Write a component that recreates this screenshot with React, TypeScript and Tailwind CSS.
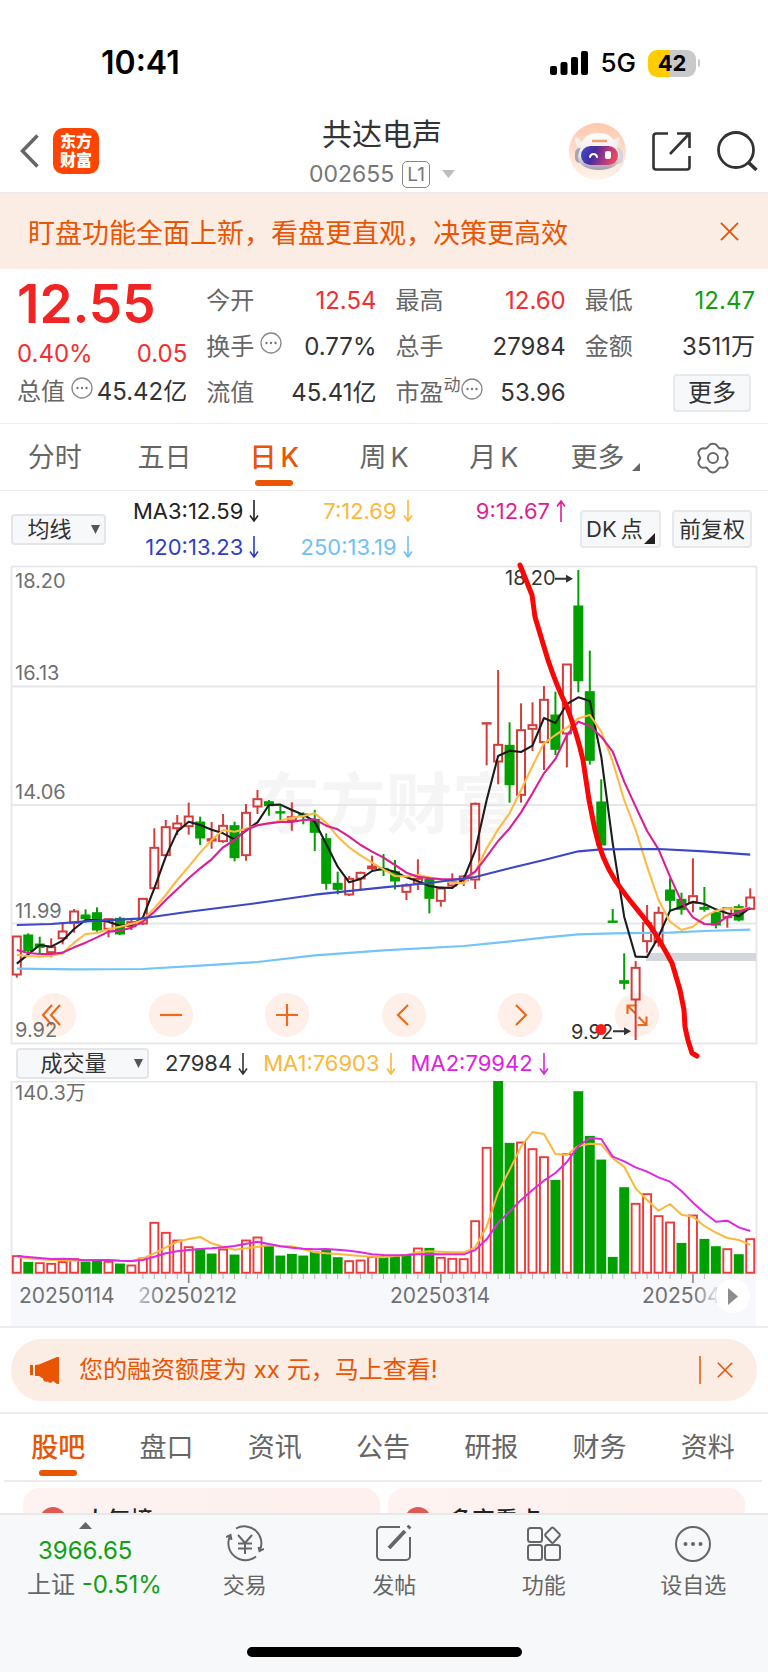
import React, { useState } from "react";
import clsx from "clsx";

type Bar = [up: 0 | 1, high: number, top: number, bottom: number, low: number];

const STEP = 11.46;
const barX = (i: number) => 16.8 + STEP * i;
const barY = (v: number) => v / 3;

// prettier-ignore
const candles: Bar[] = [
  [1, 1128, 1128, 1245, 1253], [0, 1120, 1125, 1172, 1185], [0, 1130, 1152, 1162, 1182],
  [1, 1135, 1160, 1178, 1192], [1, 1092, 1113, 1136, 1153], [1, 1047, 1053, 1090, 1118],
  [0, 1048, 1065, 1076, 1088], [0, 1042, 1058, 1110, 1115], [1, 1076, 1076, 1108, 1132],
  [0, 1070, 1075, 1122, 1125], [1, 1078, 1085, 1100, 1110], [1, 1015, 1015, 1092, 1095],
  [1, 805, 862, 986, 986], [1, 780, 800, 887, 887], [1, 765, 789, 806, 825],
  [1, 728, 768, 800, 824], [0, 770, 786, 834, 855], [1, 786, 836, 843, 866],
  [1, 762, 796, 845, 848], [0, 785, 797, 893, 904], [1, 732, 757, 887, 902],
  [1, 690, 716, 741, 762], [0, 720, 725, 737, 767], [0, 738, 755, 758, 785],
  [1, 727, 770, 783, 812], [0, 757, 762, 770, 793], [0, 750, 778, 817, 873],
  [0, 820, 836, 970, 989], [0, 935, 970, 988, 1003], [1, 948, 955, 1005, 1008],
  [1, 935, 937, 957, 993], [1, 887, 918, 926, 930], [0, 882, 925, 930, 948],
  [0, 900, 935, 963, 988], [1, 970, 975, 997, 1020], [1, 898, 955, 972, 990],
  [0, 955, 958, 1015, 1060], [1, 980, 984, 1024, 1040], [1, 940, 965, 978, 985],
  [1, 945, 948, 962, 978], [1, 728, 730, 960, 987], [1, 488, 488, 491, 616],
  [1, 330, 553, 606, 673], [0, 487, 556, 674, 728], [1, 430, 509, 706, 728],
  [1, 427, 494, 508, 573], [1, 378, 418, 548, 630], [0, 395, 465, 568, 585],
  [1, 312, 312, 522, 622], [0, 30, 138, 362, 397], [0, 272, 395, 601, 614],
  [0, 658, 726, 855, 855], [0, 1047, 1083, 1086, 1086], [0, 1180, 1262, 1270, 1288],
  [1, 1203, 1222, 1320, 1440], [1, 1035, 1088, 1145, 1178], [1, 1040, 1057, 1148, 1160],
  [0, 955, 990, 1021, 1050], [0, 998, 1018, 1048, 1064], [1, 895, 1007, 1030, 1057],
  [0, 981, 1042, 1048, 1055], [0, 1055, 1058, 1095, 1105], [1, 1043, 1043, 1073, 1103],
  [0, 1033, 1040, 1080, 1084], [1, 985, 1011, 1048, 1050],
];

// prettier-ignore
const ma3 = [
  1211, 1183, 1155, 1160, 1142, 1107, 1080, 1080, 1085, 1097, 1095, 1073, 985, 890, 815, 785, 795, 809, 820, 838,
  812, 787, 735, 734, 750, 764, 785, 852, 920, 967, 957, 933, 926, 935, 952, 964, 978, 983, 984, 957, 872, 720,
  588, 572, 576, 557, 474, 489, 432, 412, 423, 590, 850, 1070, 1190, 1191, 1130, 1052, 1040, 1025, 1032, 1048,
  1060, 1069, 1043,
];
// prettier-ignore
const ma7 = [
  1185, 1188, 1190, 1187, 1180, 1148, 1122, 1119, 1108, 1100, 1092, 1080, 1045, 1005, 960, 920, 878, 840, 810, 815,
  806, 796, 790, 782, 773, 768, 760, 788, 830, 862, 886, 908, 928, 948, 949, 945, 952, 959, 968, 970, 935, 865,
  808, 760, 690, 618, 550, 525, 503, 475, 465, 515, 605, 720, 810, 920, 1020, 1085, 1110, 1100, 1070, 1052, 1045,
  1047, 1044,
];
// prettier-ignore
const ma9 = [
  1170, 1179, 1182, 1182, 1178, 1162, 1148, 1132, 1115, 1112, 1103, 1085, 1055, 1020, 988, 955, 925, 898, 862, 840,
  810, 796, 790, 786, 786, 780, 778, 797, 808, 830, 855, 875, 893, 915, 938, 950, 955, 957, 958, 957, 935, 890,
  843, 805, 757, 700, 640, 597, 525, 485, 498, 530, 575, 665, 740, 813, 868, 950, 1025, 1072, 1092, 1093, 1070,
  1055, 1044,
];
// prettier-ignore
const ma120: [number, number][] = [
  [0, 1095], [3, 1092], [6, 1084], [11, 1075], [15, 1055], [21, 1029], [26, 1004], [32, 982], [36, 969], [40, 951],
  [43, 925], [46, 900], [49, 874], [51, 868], [56, 867], [60, 874], [64, 884],
];
// prettier-ignore
const ma250: [number, number][] = [
  [0, 1226], [5, 1228], [11, 1227], [16, 1217], [21, 1206], [26, 1186], [32, 1171], [39, 1158], [42, 1148],
  [46, 1133], [49, 1123], [52, 1120], [57, 1118], [60, 1113], [64, 1109],
];

// prettier-ignore
const volumes: [0 | 1, number][] = [
  [1, 647], [0, 667], [1, 668], [1, 670], [1, 665], [1, 656], [0, 666], [0, 660], [1, 664], [0, 672], [1, 675],
  [1, 654], [1, 547], [1, 577], [1, 600], [1, 620], [0, 627], [0, 642], [1, 627], [0, 645], [1, 600], [1, 591],
  [0, 620], [0, 648], [0, 643], [0, 648], [0, 636], [0, 630], [0, 653], [1, 662], [1, 660], [1, 650], [0, 650],
  [0, 650], [0, 645], [1, 624], [0, 625], [1, 652], [1, 655], [1, 656], [1, 542], [1, 322], [0, 124], [0, 310],
  [1, 306], [1, 326], [1, 350], [0, 421], [1, 341], [0, 155], [0, 289], [0, 360], [0, 652], [0, 443], [1, 490],
  [1, 461], [1, 527], [1, 546], [0, 610], [1, 525], [0, 598], [0, 620], [1, 626], [0, 644], [1, 596],
];
// prettier-ignore
const volMa1 = [
  650, 655, 658, 660, 660, 662, 660, 660, 660, 662, 664, 655, 640, 622, 605, 597, 591, 610, 620, 629, 625, 620,
  615, 618, 619, 628, 637, 640, 642, 645, 648, 650, 652, 648, 645, 637, 634, 635, 637, 637, 622, 560, 457, 390,
  320, 276, 282, 342, 345, 318, 311, 313, 355, 380, 445, 480, 512, 492, 524, 530, 558, 578, 594, 600, 614,
];
// prettier-ignore
const volMa2 = [
  648, 651, 654, 657, 656, 658, 661, 660, 660, 662, 663, 660, 650, 640, 634, 630, 627, 625, 622, 618, 611, 605,
  612, 619, 623, 626, 628, 627, 629, 632, 637, 643, 645, 646, 645, 643, 642, 643, 643, 643, 630, 598, 548, 515,
  480, 450, 422, 399, 366, 318, 294, 297, 350, 364, 382, 395, 412, 425, 453, 488, 518, 545, 542, 562, 573,
];

const toLine = (values: number[]) =>
  values.map((v, i) => `${barX(i)},${barY(v)}`).join(" ");

const toSparseLine = (points: [number, number][]) =>
  points.map(([i, v]) => `${barX(i)},${barY(v)}`).join(" ");

const periods = ["分时", "五日", "日K", "周K", "月K"];
const infoTabs = ["股吧", "盘口", "资讯", "公告", "研报", "财务", "资料"];

function Trend({ up = false }: { up?: boolean }) {
  return (
    <svg width="10" height="22" viewBox="0 0 10 22" fill="none" stroke="currentColor" strokeWidth="1.6">
      {up ? <path d="M5 22V1M1 6.5 5 1l4 5.5" /> : <path d="M5 0v21M1 15.5 5 21l4-5.5" />}
    </svg>
  );
}

function Close({ size }: { size: number }) {
  return (
    <svg width={size} height={size} viewBox="0 0 20 20" fill="none" stroke="currentColor" strokeWidth="2">
      <path d="m1 1 18 18M19 1 1 19" />
    </svg>
  );
}

function InfoDots() {
  return (
    <svg width="22" height="22" viewBox="0 0 22 22" className="mb-2 shrink-0">
      <circle cx="11" cy="11" r="10" fill="none" stroke="#888" strokeWidth="1.3" />
      <circle cx="6.5" cy="11" r="1.2" fill="#777" />
      <circle cx="11" cy="11" r="1.2" fill="#777" />
      <circle cx="15.5" cy="11" r="1.2" fill="#777" />
    </svg>
  );
}

function StatusBar() {
  return (
    <div className="flex items-center justify-between pt-11 pr-[68px] pl-[101px] leading-[38px] text-black">
      <span className="text-[32px] font-semibold">10:41</span>
      <div className="flex items-center gap-3">
        <svg width="38" height="24" viewBox="0 0 38 24">
          <rect x="0" y="15" width="7" height="9" rx="2" />
          <rect x="10.500" y="11" width="7" height="13" rx="2" />
          <rect x="21" y="6" width="7" height="18" rx="2" />
          <rect x="31" y="0" width="7" height="24" rx="2" />
        </svg>
        <span className="text-[26px] leading-[38px] font-medium">5G</span>
        <div className="flex items-center gap-0.5">
          <span className="flex h-[27px] w-12 items-center justify-center rounded-[9px] bg-linear-to-r from-[#fc0] from-45% to-[#c9c9cb] to-45% text-[22px] font-bold">
            42
          </span>
          <span className="h-2 w-0.5 rounded-r bg-[#c9c9cb]" />
        </div>
      </div>
    </div>
  );
}

function Robot() {
  return (
    <svg width="57" height="57" viewBox="0 0 57 57">
      <defs>
        <linearGradient id="halo" x1="0" y1="0" x2="0" y2="1">
          <stop offset="0" stopColor="#fdc9ac" />
          <stop offset="1" stopColor="#fff3ec" />
        </linearGradient>
        <linearGradient id="shell" x1="0" y1="0" x2="0" y2="1">
          <stop offset="0" stopColor="#fff" />
          <stop offset="0.6" stopColor="#ebe7ea" />
          <stop offset="1" stopColor="#9f9bab" />
        </linearGradient>
        <linearGradient id="visor" x1="0" y1="0" x2="1" y2="0.2">
          <stop offset="0" stopColor="#3b4fd0" />
          <stop offset="0.4" stopColor="#4a2a9d" />
          <stop offset="0.75" stopColor="#b03a80" />
          <stop offset="1" stopColor="#e8485e" />
        </linearGradient>
      </defs>
      <circle cx="28.500" cy="28.500" r="28.500" fill="url(#halo)" />
      <path d="M6 14c3 1 6 3 8 6l-4 5c-3-3-5-7-4-11ZM50 14c-3 1-6 3-8 6l5 5c3-3 4-7 3-11Z" fill="#f3efee" />
      <rect x="6" y="25" width="10" height="15" rx="5" fill="#aaa5b2" />
      <rect x="43" y="25" width="11" height="16" rx="5" fill="#d8d3da" />
      <path d="M29 10c10 0 16 4 18 13l4 10c0 9-9 14-21 14S9 42 9 33l3-10c2-9 7-13 17-13Z" fill="url(#shell)" />
      <rect x="12" y="23" width="37" height="19" rx="9.500" fill="url(#visor)" />
      <path d="M21 34c1-4 6-4 7 0" fill="none" stroke="#fff" strokeWidth="2" strokeLinecap="round" />
      <rect x="36" y="28" width="6" height="8" rx="2" fill="#fff" />
      <path d="M23 18h15" stroke="#eda06c" strokeWidth="2.500" />
    </svg>
  );
}

function Header() {
  return (
    <header className="flex items-center border-b-2 border-[#ececef] pt-8 pr-[10px] pb-1 pl-5">
      <div className="flex flex-1 items-center gap-[14px]">
        <button aria-label="返回">
          <svg width="19" height="34" viewBox="0 0 19 34" fill="none" stroke="#666" strokeWidth="3.500">
            <path d="M17.500 1.500 2.500 17l15 15.500" />
          </svg>
        </button>
        <a
          href="#home"
          className="flex h-[46px] w-[46px] flex-col justify-center rounded-[10px] bg-[#fe4400] text-center text-[16px] leading-[19px] font-black text-white"
        >
          <span>东方</span>
          <span>财富</span>
        </a>
      </div>
      <div className="pr-[14px] text-center">
        <h1 className="text-[30px] leading-10 text-[#333]">共达电声</h1>
        <div className="mt-1.5 flex items-center justify-center gap-2 text-[#777]">
          <span className="text-[23px] leading-7">002655</span>
          <span className="rounded-[5px] border-[1.5px] border-[#888] px-1 text-[19px] leading-[25px]">L1</span>
          <svg width="13" height="8" viewBox="0 0 13 8" className="ml-1" fill="#bdbdbd">
            <path d="M0 0h13L6.500 8Z" />
          </svg>
        </div>
      </div>
      <div className="flex flex-1 items-center justify-end gap-[26px]">
        <button aria-label="智能助手">
          <Robot />
        </button>
        <button aria-label="分享">
          <svg width="39" height="39" viewBox="0 0 39 39" fill="none" stroke="#333" strokeWidth="2.600">
            <path d="M16 1.500H4a2.500 2.500 0 0 0-2.500 2.500v31A2.500 2.500 0 0 0 4 37.500h31a2.500 2.500 0 0 0 2.500-2.500V24M25 1.500h12.500V16M37 2 18 22" />
          </svg>
        </button>
        <button aria-label="搜索">
          <svg width="41" height="40" viewBox="0 0 41 40" fill="none" stroke="#333" strokeWidth="2.800">
            <circle cx="19" cy="19" r="17.500" />
            <path d="m31 31 8.500 8" strokeWidth="3.500" />
          </svg>
        </button>
      </div>
    </header>
  );
}

function Quote({ label, value, color = "text-[#333]", mark, dots }: {
  label: string;
  value: string;
  color?: string;
  mark?: string;
  dots?: boolean;
}) {
  return (
    <div className="flex h-7 items-center justify-between leading-7 whitespace-nowrap">
      <div className="flex items-center text-[#666]">
        {label}
        {mark && <span className="mb-4 text-[17px] leading-5">{mark}</span>}
        {dots && <span className={clsx(!mark && "ml-1.5")}><InfoDots /></span>}
      </div>
      <span className={color}>{value}</span>
    </div>
  );
}

function QuotePanel() {
  return (
    <section className="grid grid-cols-4 gap-x-[19px] border-b border-[#ececef] pt-[9px] pr-[13px] pb-[7px] pl-[17px] text-[24px]">
      <div>
        <div className="text-[53px] leading-[52px] font-semibold text-[#f22323]">12.55</div>
        <div className="flex justify-between leading-[48px] text-[#f03030]">
          <span>0.40%</span>
          <span>0.05</span>
        </div>
        <Quote label="总值" value="45.42亿" dots />
      </div>
      <div className="grid auto-rows-[46px] items-center">
        <Quote label="今开" value="12.54" color="text-[#f03030]" />
        <Quote label="换手" value="0.77%" dots />
        <Quote label="流值" value="45.41亿" />
      </div>
      <div className="grid auto-rows-[46px] items-center">
        <Quote label="最高" value="12.60" color="text-[#f03030]" />
        <Quote label="总手" value="27984" />
        <Quote label="市盈" value="53.96" mark="动" dots />
      </div>
      <div className="grid auto-rows-[46px] items-center">
        <Quote label="最低" value="12.47" color="text-[#12a012]" />
        <Quote label="金额" value="3511万" />
        <div className="flex items-center justify-end pr-1">
          <button className="rounded border-2 border-[#e6e8ec] bg-[#f7f8fa] px-[13px] leading-[34px] text-[#333]">
            更多
          </button>
        </div>
      </div>
    </section>
  );
}

function TabButton({ active, onClick, children }: {
  active: boolean;
  onClick: () => void;
  children: React.ReactNode;
}) {
  return (
    <button onClick={onClick} className="flex flex-col items-center text-[27px] leading-10">
      <span className={clsx("flex gap-1", active ? "font-medium text-[#ea5504]" : "text-[#666]")}>{children}</span>
      <span className={clsx("mt-0.5 h-1.5 w-[38px] rounded-full", active && "bg-[#ea5504]")} />
    </button>
  );
}

function PeriodTabs() {
  const [period, setPeriod] = useState("日K");

  return (
    <nav className="grid grid-cols-7 border-b border-[#ececef] pt-[14px] pb-1">
      {periods.map((name) => (
        <TabButton key={name} active={period === name} onClick={() => setPeriod(name)}>
          {name.endsWith("K") ? (
            <>
              <span>{name[0]}</span>
              <span>K</span>
            </>
          ) : (
            name
          )}
        </TabButton>
      ))}
      <button className="flex justify-center gap-2 pl-1 text-[27px] leading-10 text-[#666]">
        更多
        <svg width="8" height="8" viewBox="0 0 8 8" fill="#666" className="mt-[25px]">
          <path d="M8 0v8H0Z" />
        </svg>
      </button>
      <button aria-label="设置" className="flex h-10 items-center justify-center">
        <svg width="32" height="32" viewBox="0 0 32 32" fill="none" stroke="#666" strokeWidth="2" strokeLinejoin="round">
          <path d="M12 3.500C13.500 1 18.500 1 20 3.500l1.500 2c.6.700 1.500 1.100 2.400 1l2.300-.2c3 0 5.300 4.200 4 6.700l-1.100 2c-.4.700-.4 1.500 0 2.200l1.100 2c1.300 2.500-1 6.600-4 6.600l-2.300-.2c-.9-.1-1.800.3-2.400 1L20 28.500c-1.500 2.500-6.500 2.500-8 0l-1.500-2c-.6-.7-1.500-1.100-2.400-1l-2.300.2c-3 0-5.300-4.100-4-6.600l1.100-2c.4-.7.4-1.500 0-2.200l-1.100-2c-1.300-2.500 1-6.700 4-6.700l2.300.2c.9.1 1.800-.3 2.400-1Z" />
          <circle cx="16" cy="16" r="5" />
        </svg>
      </button>
    </nav>
  );
}

function PickBox({ label, className, options }: { label: string; className: string; options: string[] }) {
  return (
    <div className={clsx("relative shrink-0", className)}>
      <select
        aria-label={label}
        className="block w-full appearance-none rounded border-2 border-[#e3e5ea] bg-[#f7f8fa] pr-[18px] text-center text-[22px] leading-[27px] text-[#333]"
      >
        {options.map((name) => (
          <option key={name}>{name}</option>
        ))}
      </select>
      <svg width="9" height="9" viewBox="0 0 9 9" fill="#555" className="pointer-events-none absolute top-[11px] right-1.5">
        <path d="M0 0h9L4.500 9Z" />
      </svg>
    </div>
  );
}

function Reading({ children, color, up }: { children: string; color: string; up?: boolean }) {
  return (
    <span className={clsx("flex items-center justify-end gap-1.5 whitespace-nowrap", color)}>
      {children}
      <Trend up={up} />
    </span>
  );
}

function AverageBar() {
  return (
    <div className="flex items-center pt-0.5 pr-4 pb-px pl-[11px] text-[22px]">
      <PickBox label="主图指标" className="w-[95px]" options={["均线", "BOLL"]} />
      <div className="grid flex-1 grid-cols-3 leading-9">
        <Reading color="text-[#222]">MA3:12.59</Reading>
        <Reading color="text-[#fbb83a]">7:12.69</Reading>
        <Reading color="text-[#dc1e96]" up>9:12.67</Reading>
        <Reading color="text-[#2f3fc4]">120:13.23</Reading>
        <Reading color="text-[#6fc0f7]">250:13.19</Reading>
      </div>
      <button className="relative ml-[14px] flex w-[81px] gap-1 rounded border-2 border-[#e6e8ec] bg-[#f7f8fa] pl-1 leading-[34px] whitespace-nowrap text-[#333]">
        <span>DK</span>
        <span>点</span>
        <svg width="11" height="11" viewBox="0 0 11 11" fill="#222" className="absolute right-1 bottom-0.5">
          <path d="M11 0v11H0Z" />
        </svg>
      </button>
      <button className="ml-[11px] w-20 rounded border-2 border-[#e6e8ec] bg-[#f7f8fa] leading-[34px] whitespace-nowrap text-[#333]">
        前复权
      </button>
    </div>
  );
}

const chartTools = [
  { name: "最早", d: "M20 12 11 22l9 10M28 12l-9 10 9 10" },
  { name: "缩小", d: "M11 22h22" },
  { name: "放大", d: "M11 22h22M22 11v22" },
  { name: "左移", d: "M26 12 16 22l10 10" },
  { name: "右移", d: "M18 12l10 10-10 10" },
  { name: "全屏", d: "M12.500 21v-8.500h9M12.500 12.500l8 8M31.500 23.500V32h-9M31.500 32l-8-8" },
];

function CandleChart() {
  return (
    <div className="relative">
      <div className="absolute right-[14.200%] bottom-[7px] left-[4.200%] flex justify-between">
        {chartTools.map((tool) => (
          <button key={tool.name} aria-label={tool.name} className="rounded-full bg-[#fef0e8]">
            <svg width="44" height="44" viewBox="0 0 44 44" fill="none" stroke="#ee6a1c" strokeWidth="2.200">
              <path d={tool.d} />
            </svg>
          </button>
        ))}
      </div>
      <svg viewBox="0 6 768 478" className="pointer-events-none relative z-10 block w-full overflow-visible">
        <text x="386" y="268" textAnchor="middle" fontSize="66" fontWeight="700" fill="#f5f5f6">
          东方财富
        </text>
        <g fill="none" stroke="#e6e7ec" strokeWidth="1.800">
          <rect x="11.500" y="6.500" width="745" height="477" />
          <path d="M11.500 126.500h745M11.500 245h745M11.500 363.500h745" />
        </g>
        <rect x="646" y="393" width="110" height="8" fill="#d3d7dd" />
        <g fontSize="20" fill="#707070">
          <text x="15" y="28">18.20</text>
          <text x="15" y="120">16.13</text>
          <text x="15" y="239">14.06</text>
          <text x="15" y="358">11.99</text>
          <text x="15" y="477">9.92</text>
        </g>
        {candles.map(([up, high, top, bottom, low], i) => {
          const x = barX(i);
          const color = up ? "#d43c3c" : "#00a000";
          return (
            <g key={i} stroke={color} strokeWidth="2">
              {high < top && <line x1={x} x2={x} y1={barY(high)} y2={barY(top)} />}
              {low > bottom && <line x1={x} x2={x} y1={barY(bottom)} y2={barY(low)} />}
              <rect
                x={x - 4}
                y={barY(top) + 0.5}
                width="8"
                height={Math.max(barY(bottom - top) - 1, 0.4)}
                fill={up ? "none" : color}
              />
            </g>
          );
        })}
        <g fill="none" strokeWidth="2.100" strokeLinejoin="round">
          <polyline points={toSparseLine(ma250)} stroke="#72c4fa" />
          <polyline points={toLine(ma3)} stroke="#1c1c1c" />
          <polyline points={toLine(ma7)} stroke="#fbbb45" />
          <polyline points={toLine(ma9)} stroke="#dc1e96" />
          <polyline points={toSparseLine(ma120)} stroke="#3a48c8" />
        </g>
        <g fontSize="20" fill="#333" stroke="none">
          <text x="505" y="25">18.20</text>
          <text x="571" y="479">9.92</text>
          <path d="M555 17.800h11v-3l7 4-7 4v-3h-11ZM613 470.300h11v-3l7 4-7 4v-3h-11Z" />
        </g>
        <circle cx="601" cy="469.500" r="5.500" fill="#f81e1e" />
        <path
          d="M520 5 532 35 535 57 548 100C554 118 560 133 567 147C574 166 579 182 583 200L589 240 595 270C599 288 606 306 615 320C628 340 642 354 653 370C660 381 666 392 672 403L680 430 684 450 685 467C687 478 689 485 692 493L697 496"
          fill="none"
          stroke="#fb0505"
          strokeWidth="5"
          strokeLinecap="round"
          strokeLinejoin="round"
        />
      </svg>
    </div>
  );
}

function VolumeBar() {
  return (
    <div className="flex items-center pt-1 pb-0.5 pl-4 text-[22px] leading-[31px]">
      <PickBox label="副图指标" className="w-[133px]" options={["成交量", "MACD"]} />
      <div className="ml-4 flex gap-[15px]">
        <Reading color="text-[#333]">27984</Reading>
        <Reading color="text-[#fbb83a]">MA1:76903</Reading>
        <Reading color="text-[#dd22e0]">MA2:79942</Reading>
      </div>
    </div>
  );
}

function VolumeChart() {
  return (
    <div className="relative border-b-2 border-[#ececef]">
      <svg viewBox="0 41 768 245" className="block w-full">
        <defs>
          <linearGradient id="fadeIn" x1="139" x2="160" y1="0" y2="0" gradientUnits="userSpaceOnUse">
            <stop offset="0" stopColor="#c4c4c8" />
            <stop offset="1" stopColor="#707070" />
          </linearGradient>
          <linearGradient id="fadeOut" x1="694" x2="718" y1="0" y2="0" gradientUnits="userSpaceOnUse">
            <stop offset="0" stopColor="#707070" />
            <stop offset="1" stopColor="#e4e4e8" />
          </linearGradient>
        </defs>
        <rect x="11" y="234" width="745" height="52" fill="#f7f8fb" />
        <rect x="11.500" y="41.500" width="745" height="192" fill="none" stroke="#e6e7ec" strokeWidth="1.800" />
        <text x="15" y="60" fontSize="20" fill="#707070">
          140.3万
        </text>
        {volumes.map(([up, top], i) => (
          <rect
            key={i}
            x={barX(i) - 4}
            y={barY(top) + 0.5}
            width="8"
            height={barY(699 - top) - 0.8}
            fill={up ? "none" : "#00a000"}
            stroke={up ? "#ee3a3a" : "#00a000"}
            strokeWidth="1.900"
          />
        ))}
        {volumes.slice(11, 61).map((_, n) => {
          const i = n + 11;
          const major = i % 22 === 15;
          return (
            <path
              key={i}
              d={`M${barX(i)} 234V${major ? 243 : 239}`}
              stroke={major ? "#8a8a8a" : "#b4b4b8"}
              strokeWidth={major ? 1.6 : 1}
            />
          );
        })}
        <g fill="none" strokeWidth="2" strokeLinejoin="round">
          <polyline points={toLine(volMa1)} stroke="#fbb83a" />
          <polyline points={toLine(volMa2)} stroke="#dd28e4" />
        </g>
        <g fontSize="21" fill="#707070">
          <text x="19" y="263">20250114</text>
          <text x="138" y="263" fill="url(#fadeIn)">20250212</text>
          <text x="390" y="263">20250314</text>
          <text x="642" y="263" fill="url(#fadeOut)">202504</text>
        </g>
      </svg>
      <button
        aria-label="播放"
        className="absolute right-[18px] bottom-[13px] flex h-[34px] w-[34px] items-center justify-center rounded-full bg-white"
      >
        <svg width="10" height="17" viewBox="0 0 10 17" fill="#8c8c8c">
          <path d="m0 0 10 8.500L0 17Z" />
        </svg>
      </button>
    </div>
  );
}

function CreditNotice() {
  return (
    <div className="border-b-2 border-[#ececef] px-[11px] pt-[11px] pb-[11px]">
      <div className="flex items-center rounded-full bg-[#fcede4] pr-6 pl-[19px] text-[#ea5504]">
        <svg width="29" height="27" viewBox="0 0 29 27" fill="currentColor">
          <path d="M0 8h3v10H0ZM5 8l4-.5L27 0h2v27h-2l-4-3c-1 2-4 2.500-5 .5-3 1-5-.5-5-3l-4-2.500H5Z" />
        </svg>
        <p className="ml-5 flex-1 text-[24px] leading-[62px]">您的融资额度为 xx 元，马上查看!</p>
        <span className="mr-4 h-7 w-0.5 bg-[#ea7a3c]" />
        <button aria-label="关闭提醒">
          <Close size={16} />
        </button>
      </div>
    </div>
  );
}

function Community() {
  const [tab, setTab] = useState("股吧");

  return (
    <section>
      <nav className="mr-1.5 ml-1 grid grid-cols-7 border-b-2 border-[#ececef] pt-[14px] pb-1">
        {infoTabs.map((name) => (
          <TabButton key={name} active={tab === name} onClick={() => setTab(name)}>
            {name}
          </TabButton>
        ))}
      </nav>
      <div className="grid grid-cols-2 gap-2 px-[23px] pt-1.5">
        {["人气榜", "多空看点"].map((title) => (
          <a
            key={title}
            href="#rank"
            className="flex items-center gap-[18px] rounded-2xl bg-linear-to-r from-[#fef3f1] to-[#fdf0ee] px-[17px] py-4 text-[23px] leading-8 font-medium text-[#222]"
          >
            <span className="h-[26px] w-[26px] rounded-full bg-[#e05a55]" />
            {title}
          </a>
        ))}
      </div>
    </section>
  );
}

const actions = [
  {
    name: "交易",
    icon: (
      <>
        <path d="M10 3.500A17 17 0 0 1 34 25M30 31.500A17 17 0 0 1 4 11M0 12l4.500-2 1 5M38 24l-4.500 2-1-4" />
        <path d="m12 10 7 8 7-8M12 18.500h14M12 23.500h14M19 18v11" />
      </>
    ),
  },
  {
    name: "发帖",
    icon: (
      <>
        <path d="M25 2H6a4 4 0 0 0-4 4v25a4 4 0 0 0 4 4h25a4 4 0 0 0 4-4V12" />
        <path d="m30 6-16 17M33 3l2-2" strokeWidth="4" />
      </>
    ),
  },
  {
    name: "功能",
    icon: (
      <>
        <rect x="3" y="3" width="14" height="14" rx="2.500" />
        <rect x="3" y="20" width="14" height="15" rx="2.500" />
        <rect x="20" y="20" width="15" height="15" rx="2.500" />
        <path d="M26.500 3a1.500 1.500 0 0 1 2 0l6 6a1.500 1.500 0 0 1 0 2l-6 6.500a1.500 1.500 0 0 1-2 0l-6-6.500a1.500 1.500 0 0 1 0-2Z" />
      </>
    ),
  },
  {
    name: "设自选",
    icon: (
      <>
        <circle cx="19" cy="19" r="17" />
        <path d="M11.500 19h.01M19 19h.01M26.500 19h.01" strokeWidth="4" strokeLinecap="round" />
      </>
    ),
  },
];

function BottomBar() {
  return (
    <footer className="border-t-2 border-[#e6e8ea] bg-[#f7f8fa]">
      <div className="flex">
        <a href="#index" className="w-[170px] shrink-0 pt-[7px] pl-[27px] text-[24px] whitespace-nowrap">
          <svg width="13" height="7" viewBox="0 0 13 7" fill="#666" className="ml-[52px]">
            <path d="M0 7h13L6.500 0Z" />
          </svg>
          <div className="mt-[5px] pl-[11px] leading-[34px] text-[#12a012]">3966.65</div>
          <div className="leading-[34px] text-[#666]">
            上证 <span className="text-[#12a012]">-0.51%</span>
          </div>
        </a>
        <div className="grid flex-1 grid-cols-4">
          {actions.map((action) => (
            <button key={action.name} className="flex flex-col items-center pt-[10px] text-[22px] text-[#666]">
              <svg width="38" height="38" viewBox="0 0 38 38" fill="none" stroke="#666" strokeWidth="2">
                {action.icon}
              </svg>
              <span className="mt-[5px] leading-[34px]">{action.name}</span>
            </button>
          ))}
        </div>
      </div>
      <div className="mx-auto mt-[45px] mb-[15px] h-2.5 w-[275px] rounded-full bg-black" />
    </footer>
  );
}

export default function App() {
  const [showTip, setShowTip] = useState(true);

  return (
    <div className="flex h-screen flex-col bg-white font-['Inter','Noto_Sans_CJK_SC',sans-serif]">
      <main className="min-h-0 flex-1 overflow-hidden">
        <StatusBar />
        <Header />
        {showTip && (
          <div className="flex items-center justify-between bg-[#fcede4] py-[22px] pr-[29px] pl-[28px] text-[27px] leading-[27px] text-[#ea5504]">
            <p className="pt-1">盯盘功能全面上新，看盘更直观，决策更高效</p>
            <button aria-label="关闭" onClick={() => setShowTip(false)}>
              <Close size={19} />
            </button>
          </div>
        )}
        <QuotePanel />
        <PeriodTabs />
        <AverageBar />
        <CandleChart />
        <VolumeBar />
        <VolumeChart />
        <CreditNotice />
        <Community />
      </main>
      <BottomBar />
    </div>
  );
}
